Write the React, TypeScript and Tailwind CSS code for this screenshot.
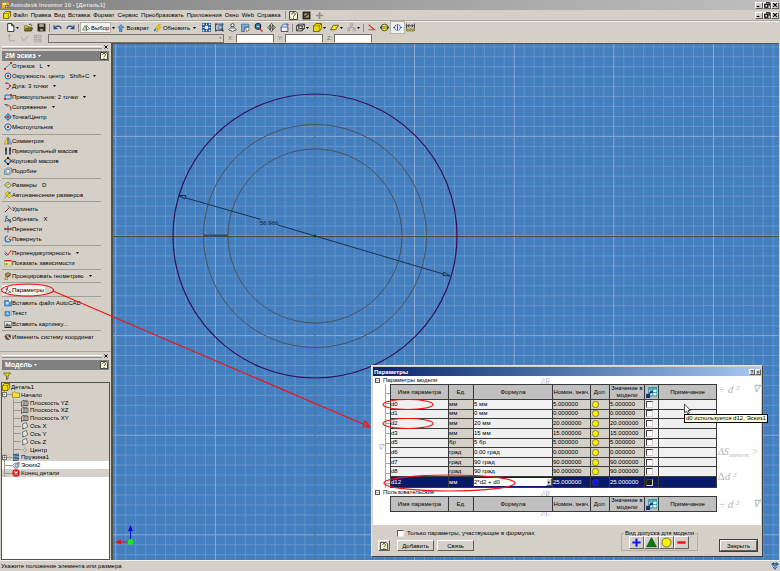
import { useState } from 'react';
import type { ReactNode } from 'react';

type Tool = { icon: string; label: string; hint?: string; menu?: boolean; active?: boolean };

const BLUE = '#1a6fc4';
const RED = '#d8271c';
const DARK = '#333333';

const icons: Record<string, ReactNode> = {
  line: <><path d="M2 13L13 3" stroke={BLUE} strokeWidth="1.6" /><path d="M0 12h4v4H0zM12 0h4v4h-4z" fill={RED} /></>,
  circle: <><circle cx="8" cy="8" r="6" stroke={BLUE} strokeWidth="2" /><path d="M6 6h4v4H6z" fill={RED} /></>,
  arc: <><path d="M5 2C13 3 15 10 8 13" stroke={BLUE} strokeWidth="2" /><path d="M3 1h4v3H3zM10 6h4v3h-4zM5 12h4v3H5z" fill={RED} /></>,
  rect: <><path d="M2 4h12v8H2z" stroke={BLUE} strokeWidth="2" /><path d="M0 10h4v4H0zM12 2h4v4h-4z" fill={RED} /></>,
  fillet: <><path d="M1 3h6M14 9v6" stroke={DARK} strokeWidth="1.4" /><path d="M6 4c5 0 7 3 7 7" stroke={RED} strokeWidth="2" /><path d="M2 2l5 6" stroke={BLUE} strokeWidth="1.4" /></>,
  point: <><circle cx="8" cy="8" r="5" stroke={BLUE} strokeWidth="2" /><path d="M8 0v16M0 8h16" stroke={BLUE} strokeWidth="1.6" /><path d="M6 6h4v4H6z" fill={RED} /></>,
  polygon: <><path d="M5 2h6l4 6-4 6H5L1 8z" stroke={BLUE} strokeWidth="2" /><path d="M6 6h4v4H6z" fill={RED} /></>,
  mirror: <><path d="M7 1v13H0z" fill="#f2dc20" stroke="#8a6d00" /><path d="M9 1v13h7z" fill="#7db9ee" stroke={BLUE} /><path d="M8 0v16" stroke={RED} /></>,
  pattern: <><path d="M2 1h4v14H2zM10 1h4v14h-4z" fill="#31435f" /><path d="M3 3h2v2H3zM11 3h2v2h-2z" fill={RED} /><path d="M3 9h2v2H3zM11 9h2v2h-2z" fill="#88b6e8" /></>,
  circular: <><circle cx="8" cy="8" r="5" stroke={DARK} strokeWidth="2" /><path d="M6 0h4v4H6zM6 12h4v4H6z" fill="#222" /><path d="M0 6h4v4H0zM12 6h4v4h-4z" fill={BLUE} /><path d="M3 2h3v3H3z" fill="#d9a514" /></>,
  offset: <><path d="M1 6l4-4h10v8l-3 5H1z" fill="#b4cfe6" stroke="#35536f" /><path d="M4 8l2-3h6v5l-2 2H4z" fill="#f1f1f1" stroke="#35536f" /></>,
  dimension: <><path d="M1 8l7-6 7 6-7 6z" fill="#f4e25a" stroke={BLUE} strokeWidth="1.5" /><path d="M5 9l5-3" stroke={DARK} /></>,
  autodim: <><path d="M2 6l5-5 8 8-5 5z" fill="#f2d81d" stroke="#8b7a12" /><path d="M1 14L13 2M9 2l4 3" stroke={BLUE} strokeWidth="1.4" /></>,
  extend: <><path d="M2 14l6-6" stroke={DARK} strokeWidth="2" /><path d="M8 8l3-3" stroke={RED} strokeWidth="2" /><path d="M8 1l7 8" stroke={BLUE} strokeWidth="2" /></>,
  trim: <><path d="M2 14L6 1M5 12L14 9" stroke={DARK} strokeWidth="1.6" /><path d="M3 3l11 11" stroke={BLUE} strokeWidth="2" /><circle cx="12" cy="13" r="2" stroke={DARK} /></>,
  move: <><path d="M8 1v14M1 8h14" stroke={BLUE} strokeWidth="2" /><path d="M5 6h6v4H5z" fill={RED} /><path d="M0 8l3-3v6zM16 8l-3-3v6z" fill={DARK} /></>,
  rotate: <><path d="M8 2a6 6 0 1 0 6 7" stroke={BLUE} strokeWidth="2.4" /><path d="M8 9l6-6M10 9h5" stroke={RED} strokeWidth="1.6" /></>,
  perp: <><path d="M2 5l6 7L15 2" stroke={RED} strokeWidth="2" /><path d="M1 8l5 6" stroke={BLUE} strokeWidth="2" /></>,
  constraints: <><path d="M1 3h14v11H1z" fill="#fff7cf" stroke="#8a8a4a" /><path d="M1 2h14v3H1z" fill={RED} /><path d="M3 8h4v4H3z" fill="#52a344" /><path d="M9 8h4v4H9z" fill="#e4cf2a" /></>,
  project: <><path d="M2 4l6-3 6 3-3 5H4z" fill="#a5915b" stroke="#423617" /><path d="M3 14l9-8" stroke={DARK} strokeWidth="1.6" /><path d="M2 10h5v5H2z" fill="#efdc3d" stroke="#6d5f10" /></>,
  fx: <><path d="M9 2C6 1 7 5 6 8s-1 6-4 5M3 6h5" stroke={DARK} strokeWidth="1.6" /><path d="M9 9l5 5M14 9l-5 5" stroke={DARK} strokeWidth="1.4" /></>,
  acad: <><path d="M1 3h14v11H1z" fill="#4a97db" stroke="#1e5d9b" /><path d="M4 6h5v5H4z" fill="#cfe6fb" /><path d="M10 1h4v4h-4z" fill="#f1f1f1" /></>,
  text: <><path d="M2 5h9v9H2z" fill="#4a97db" stroke="#1e5d9b" /><path d="M13 1v14M5 12l2-5 2 5" stroke="#dcecff" strokeWidth="1.4" /><path d="M14 2v12" stroke="#1e5d9b" /></>,
  image: <><path d="M1 3h14v10H1z" fill="#dfe9ee" stroke="#444" /><path d="M2 12l4-6 4 4 2-2 2 4z" fill="#496a58" /><path d="M1 15h14" stroke="#222" strokeWidth="2" /></>,
  ucs: <><circle cx="8" cy="8" r="6" fill="#524b45" /><path d="M3 3l10 10M8 2v8h6" stroke="#eee" strokeWidth="1.4" /><path d="M1 8l4-5" stroke={RED} strokeWidth="2" /></>,
  part: <><path d="M1 5l4-4h10v9l-4 5H1z" fill="#f5dc00" stroke="#5b5200" strokeWidth="1.5" /><path d="M1 5h10v10M11 5l4-4" stroke="#5b5200" /></>,
  app: <><path d="M0 1h16v14H0z" fill="#f0a818" /><path d="M2 3h7v5H2z" fill="#fff3c8" /><path d="M7 7h8v7H7z" fill="#2d6db8" /><path d="M9 9h3v3H9z" fill="#fff" /></>,
  new: <path d="M3 1h7l4 4v10H3zM10 1v4h4" fill="#fff" stroke="#222" strokeWidth="1.6" />,
  open: <><path d="M1 5h5l1 2h6v7H1z" fill="#e8c62a" stroke="#4d4210" /><path d="M4 9h12l-3 5H1z" fill="#7d7228" stroke="#2d270a" /><path d="M9 3c2-2 4-1 5 2" stroke="#222" strokeWidth="1.5" /></>,
  save: <><path d="M1 1h14v14H1z" fill="#26261f" /><path d="M4 2h8v5H4z" fill="#a9a69d" /><path d="M5 10h6v4H5z" fill="#8f8d80" /></>,
  undo: <path d="M2 4v6h6M3 9c3-5 11-5 11 1" stroke="#26449b" strokeWidth="2.2" />,
  redo: <path d="M14 4v6H8M13 9C10 4 2 4 2 10" stroke="#26449b" strokeWidth="2.2" />,
  select: <><path d="M1 12l5-9 4 9z" fill="#c8e8c9" stroke="#328b45" strokeWidth="1.5" /><path d="M9 3v10l3-3h4z" fill="#fff" stroke="#222" /></>,
  back: <path d="M8 1l6 6h-4v8H5V7H2z" fill="#4ba0e4" stroke="#17558f" />,
  update: <><path d="M10 0L3 9h5l-3 7 9-10H9l4-6z" fill="#ffd800" stroke="#b48800" /><path d="M0 14l4-4" stroke={BLUE} strokeWidth="3" /></>,
  zoomAll: <><path d="M0 0h16v16H0z" fill="#1c4f86" /><path d="M5 5h6v6H5z" fill="#e6eef7" /><path d="M7 1h2v3H7zM7 12h2v3H7zM1 7h3v2H1zM12 7h3v2h-3zM1 1h3v3H1zM12 1h3v3h-3zM1 12h3v3H1zM12 12h3v3h-3z" fill="#dcebfa" /></>,
  zoomWin: <><path d="M1 2h12v11H1z" stroke="#1c3f6a" strokeWidth="1.6" /><circle cx="9" cy="8" r="4" fill="#8fc0ec" stroke="#333" /><path d="M0 1h3v3H0zM12 1h3v3h-3zM0 12h3v3H0z" fill="#1c4f86" /><path d="M12 11l3 4" stroke="#222" strokeWidth="2" /></>,
  zoom: <><circle cx="8" cy="4" r="3" fill="#e6eef7" stroke="#333" strokeWidth="1.5" /><path d="M6 7l-5 5 7 3 7-3-5-5z" fill="#eee" stroke="#333" strokeWidth="1.3" /><path d="M5 11l3-2 3 2" stroke="#333" /></>,
  pan: <><path d="M1 2h13v5H6v8H1z" fill="#70aee4" stroke="#1c3f6a" /><path d="M8 8h6v5l-4 2z" fill="#fff" stroke="#333" /></>,
  lens: <><circle cx="7" cy="6" r="5" fill="#2f7fcb" stroke="#222" strokeWidth="1.8" /><path d="M5 6h4" stroke="#fff" strokeWidth="1.5" /><path d="M10 10l5 5" stroke={RED} strokeWidth="2.4" /></>,
  orbit: <><path d="M1 8l5-4v3h4V4l5 4-5 4V9H6v3z" fill="#ddd" stroke="#333" strokeWidth="1.2" /><ellipse cx="8" cy="8" rx="3" ry="7" stroke="#333" strokeWidth="1.4" /></>,
  look: <><path d="M2 7h12v8H2z" fill="#f4f4f4" stroke="#1c3f6a" strokeWidth="1.5" /><path d="M3 6l3-4h8l-2 4" fill="#cfe6fb" stroke={BLUE} strokeWidth="1.6" /><path d="M12 1l3 3" stroke={RED} strokeWidth="2" /></>,
  cube: <path d="M1 5l4-3h10v8l-4 4H1zM1 5h10v9M11 5l4-3M5 2v8h10M5 10l-4 4" stroke="#222" strokeWidth="1.4" />,
  plane: <path d="M1 12L6 4h9l-5 8z" fill="#f4e41c" stroke="#4d4210" strokeWidth="1.4" />,
  nodes: <path d="M6 1h4v4H6zM1 10h4v4H1zM11 10h4v4h-4zM8 5v3M3 10V8h10v2" stroke="#a3a099" strokeWidth="1.5" />,
  angle: <><path d="M3 3l10 9" stroke={RED} strokeWidth="2" /><path d="M2 12h13" stroke="#a8583c" strokeWidth="1.6" /></>,
  section: <><circle cx="8" cy="8" r="6" fill="#f4e41c" stroke="#333" strokeWidth="1.4" /><path d="M0 8h16" stroke="#333" strokeWidth="3" /><path d="M3 8h10" stroke="#7db9ee" strokeWidth="2" /></>,
  center: <><path d="M6 3a5.500 5.500 0 0 0 0 10M10 3a5.500 5.500 0 0 1 0 10" stroke={BLUE} strokeWidth="1.6" /><path d="M8 2v12" stroke={RED} strokeWidth="1.8" /><path d="M0 8h3M13 8h3" stroke={BLUE} strokeWidth="1.6" /></>,
  measure: <><path d="M1 1v9M15 1v9M3 5h10M6 2L3 5l3 3M10 2l3 3-3 3" stroke="#222" strokeWidth="1.4" /><path d="M1 11h14v3H1z" fill="#e8d410" stroke="#333" /></>,
  help: <><path d="M1 1h11l3 3v11H1z" fill="#fffbd2" stroke="#222" strokeWidth="1.5" /><path d="M5 6c0-4 6-4 6 0 0 2-3 2-3 4M8 12v2" stroke="#222" strokeWidth="1.7" /></>,
  film: <><path d="M1 1h14v14H1z" fill="#252525" /><path d="M4 4h8v8H4z" fill="#a09559" /><path d="M4 11l7-6" stroke="#222" strokeWidth="2" /></>,
  plus: <path d="M8 2v12M2 8h12" stroke="#8b8b86" strokeWidth="3" />,
  axes: <path d="M4 2v10h10M2 4l2-3 2 3" stroke="#a3a099" strokeWidth="1.5" />,
  bend: <path d="M2 5l5 7 7-8" stroke="#a3a099" strokeWidth="1.5" />,
  blocks: <path d="M2 2h4v4H2zM9 2h5v5H9zM2 9h5v5H2zM10 10h4v4h-4z" stroke="#a3a099" strokeWidth="1.5" />,
  folder: <path d="M1 4l2-2h4l2 2h6v9H1z" fill="#f4e13a" stroke="#7c6f16" strokeWidth="1.3" />,
  workplane: <><path d="M1 5l5-3v10l-5 3zM6 4h8v9H5" fill="#cbc8bf" stroke="#333" strokeWidth="1.3" /><path d="M10 1v13" stroke="#333" /></>,
  axis: <><path d="M3 4l8-3 2 9-9 4z" fill="#eceae5" stroke="#333" strokeWidth="1.2" /><path d="M2 15l3-3" stroke="#333" /></>,
  dot: <><path d="M8 1v14M1 8h14" stroke="#aaa79f" strokeWidth="1.3" /><path d="M8 4l4 4-4 4-4-4z" fill="#d4d0c8" stroke="#888" /></>,
  coil: <path d="M2 3l12-1M2 6l12-1M2 9l12-1M2 12l12-1M2 15l12-1" stroke="#1f4e86" strokeWidth="2" />,
  sketch: <><path d="M1 9l5-5h8v6l-4 4H5z" fill="#f3f3f3" stroke="#444" strokeWidth="1.3" /><circle cx="9" cy="9" r="3" stroke={BLUE} strokeWidth="1.6" /><path d="M10 7l5-5" stroke={RED} strokeWidth="2" /></>,
  end: <><circle cx="8" cy="8" r="7.5" fill="#e01b1b" /><path d="M5 5l6 6M11 5l-6 6" stroke="#fff" strokeWidth="2.2" /></>,
  filter: <path d="M1 2h14L10 8v6l-3 1V8z" fill="#f4dc00" stroke="#4d4210" strokeWidth="1.4" />,
  export: <><path d="M4 1h12v12H4z" fill="#eef9fb" stroke="#1c7f96" strokeWidth="1.4" /><path d="M4 2h12v2H4z" fill="#1c9bb0" /><path d="M4 8h12M10 1v12" stroke="#1c9bb0" strokeWidth="1.2" /><path d="M0 10h6v6H0z" fill="#16366f" /><path d="M5 10l4-4M6 6h3v3" stroke="#16366f" strokeWidth="2" /></>,
  spark: <path d="M2 3h12v3H2zM8 6v9M3 9l5 5 5-5M5 1v6M11 1v6" stroke="#1e5d9b" strokeWidth="2" />,
};

const Icon = ({ name, className = 'size-2' }: { name: string; className?: string }) => (
  <svg viewBox="0 0 16 16" fill="none" className={`${className} shrink-0`} aria-hidden="true">
    {icons[name]}
  </svg>
);

const Caret = ({ className = 'text-black' }: { className?: string }) => (
  <svg viewBox="0 0 3 2" className={`w-[3px] h-[2px] shrink-0 ${className}`} aria-hidden="true">
    <path d="M0 0h3L1.500 2z" fill="currentColor" />
  </svg>
);

const menuItems = ['Файл', 'Правка', 'Вид', 'Вставка', 'Формат', 'Сервис', 'Преобразовать', 'Приложения', 'Окно', 'Web', 'Справка'];

const toolGroups: Tool[][] = [
  [
    { icon: 'line', label: 'Отрезок', hint: 'L', menu: true },
    { icon: 'circle', label: 'Окружность: центр', hint: 'Shift+C', menu: true },
    { icon: 'arc', label: 'Дуга: 3 точки', menu: true },
    { icon: 'rect', label: 'Прямоугольник: 2 точки', menu: true },
    { icon: 'fillet', label: 'Сопряжение', menu: true },
    { icon: 'point', label: 'Точка/Центр' },
    { icon: 'polygon', label: 'Многоугольник' },
  ],
  [
    { icon: 'mirror', label: 'Симметрия' },
    { icon: 'pattern', label: 'Прямоугольный массив' },
    { icon: 'circular', label: 'Круговой массив' },
    { icon: 'offset', label: 'Подобие' },
  ],
  [
    { icon: 'dimension', label: 'Размеры', hint: 'D' },
    { icon: 'autodim', label: 'Автонанесение размеров' },
  ],
  [
    { icon: 'extend', label: 'Удлинить' },
    { icon: 'trim', label: 'Обрезать', hint: 'X' },
    { icon: 'move', label: 'Перенести' },
    { icon: 'rotate', label: 'Повернуть' },
  ],
  [
    { icon: 'perp', label: 'Перпендикулярность', menu: true },
    { icon: 'constraints', label: 'Показать зависимости' },
  ],
  [{ icon: 'project', label: 'Проецировать геометрию', menu: true }],
  [{ icon: 'fx', label: 'Параметры', active: true }],
  [
    { icon: 'acad', label: 'Вставить файл AutoCAD' },
    { icon: 'text', label: 'Текст' },
    { icon: 'image', label: 'Вставить картинку...' },
  ],
  [{ icon: 'ucs', label: 'Изменить систему координат' }],
];

const tree = [
  { icon: 'part', label: 'Деталь1', depth: 0 },
  { icon: 'folder', label: 'Начало', depth: 1, box: '−' },
  { icon: 'workplane', label: 'Плоскость YZ', depth: 2 },
  { icon: 'workplane', label: 'Плоскость XZ', depth: 2 },
  { icon: 'workplane', label: 'Плоскость XY', depth: 2 },
  { icon: 'axis', label: 'Ось X', depth: 2 },
  { icon: 'axis', label: 'Ось Y', depth: 2 },
  { icon: 'axis', label: 'Ось Z', depth: 2 },
  { icon: 'dot', label: 'Центр', depth: 2 },
  { icon: 'coil', label: 'Пружина1', depth: 1, box: '+' },
  { icon: 'sketch', label: 'Эскиз2', depth: 1, current: true },
  { icon: 'end', label: 'Конец детали', depth: 1 },
];

const params = [
  { name: 'd0', unit: 'мм', formula: '5 мм', value: '5.000000' },
  { name: 'd1', unit: 'мм', formula: '0 мм', value: '0.000000' },
  { name: 'd2', unit: 'мм', formula: '20 мм', value: '20.000000' },
  { name: 'd3', unit: 'мм', formula: '15 мм', value: '15.000000' },
  { name: 'd5', unit: 'бр', formula: '5 бр', value: '5.000000' },
  { name: 'd6', unit: 'град', formula: '0.00 град', value: '0.000000' },
  { name: 'd7', unit: 'град', formula: '90 град', value: '90.000000' },
  { name: 'd8', unit: 'град', formula: '90 град', value: '90.000000' },
  { name: 'd12', unit: 'мм', formula: '2*d2 + d0', value: '25.000000' },
];

const raised = 'border border-t-white border-l-white border-r-[#606060] border-b-[#606060] bg-[#d4d0c8]';

const WindowButtons = () => (
  <div className="flex">
    {['M2 12h7', 'M5 2h9v8M2 6h8v8H2z', 'M3 3l10 10M13 3L3 13'].map((d) => (
      <button key={d} aria-label="window" className={`${raised} w-2 h-[7px] flex items-center justify-center`}>
        <svg viewBox="0 0 16 16" className="size-[6px]" fill="none">
          <path d={d} stroke="#000" strokeWidth="3" />
        </svg>
      </button>
    ))}
  </div>
);

const Separator = () => <span className="w-px h-2 bg-[#8f8c85] mx-px" />;

const IconButton = ({ name, menu, on }: { name: string; menu?: boolean; on?: boolean }) => (
  <button aria-label={name} className={`flex items-center gap-px px-[2px] h-[11px] ${on ? 'bg-[#f1efeb] outline outline-[#b5b2aa]' : ''}`}>
    <Icon name={name} className="size-[9px]" />
    {menu && <Caret />}
  </button>
);

const Toolbars = () => (
  <>
    <div className="h-[11px] flex items-center justify-between pl-[3px] pr-px border-b border-[#a8a59d]">
      <nav className="flex items-center">
        <Icon name="part" />
        <div className="flex items-center gap-[3px] pl-[2px] pr-[3px]">
          {menuItems.map((item) => (
            <button key={item}>{item}</button>
          ))}
        </div>
        <Separator />
        <IconButton name="help" />
        <IconButton name="film" />
        <IconButton name="plus" />
      </nav>
      <WindowButtons />
    </div>
    <div className="h-3 flex items-center pl-1 border-t border-[#f1efeb]">
      <IconButton name="new" menu />
      <div className="w-px" />
      <IconButton name="open" />
      <IconButton name="save" />
      <Separator />
      <IconButton name="undo" />
      <IconButton name="redo" />
      <Separator />
      <button className="flex items-center gap-px h-[11px] px-px bg-[#f4f3f0] border border-[#b5b2aa]">
        <Icon name="select" />
        Выбор
      </button>
      <button aria-label="more" className="px-px"><Caret /></button>
      <button className="flex items-center gap-px px-px">
        <Icon name="back" />
        Возврат
      </button>
      <button className="flex items-center gap-px pl-1 pr-[3px]">
        <Icon name="update" />
        Обновить
      </button>
      <button aria-label="more" className="pr-1"><Caret /></button>
      {['zoomAll', 'zoomWin', 'zoom', 'pan', 'lens', 'orbit', 'look'].map((name) => (
        <IconButton key={name} name={name} />
      ))}
      <Separator />
      <IconButton name="cube" menu />
      <IconButton name="part" menu />
      <IconButton name="plane" menu />
      <IconButton name="nodes" menu />
      <Separator />
      <IconButton name="angle" />
      <IconButton name="section" />
      <IconButton name="center" on />
      <IconButton name="measure" />
    </div>
    <div className="h-[10px] flex items-center pl-[5px]">
      <IconButton name="axes" />
      <IconButton name="bend" />
      <IconButton name="blocks" />
      <div className="relative ml-1 w-[176px]">
        <select aria-label="Стиль" disabled className="appearance-none block w-full h-[9px] bg-[#d4d0c8] border border-[#76736c]" />
        <span className="absolute right-[2px] top-[3px]"><Caret className="text-[#8f8c85]" /></span>
      </div>
      {['X', 'Y', 'Z'].map((axis) => (
        <label key={axis} className="flex items-center gap-[2px] ml-[4px] text-[#76736c]">
          {axis}:
          <input className="w-[38px] h-[9px] bg-white border border-[#76736c] border-b-[#e8e6e1]" />
        </label>
      ))}
    </div>
  </>
);

const PanelHeader = ({ title }: { title: string }) => (
  <>
    <div className="flex items-center gap-[2px] h-2 px-[2px]">
      <div className="flex-1 h-[3px] border-y border-t-white border-b-[#8f8c85]" />
      <button aria-label="Закрыть панель" className="w-[5px]">
        <svg viewBox="0 0 16 16" className="size-1" fill="none">
          <path d="M2 2l12 12M14 2L2 14" stroke="#000" strokeWidth="4" />
        </svg>
      </button>
    </div>
    <div className="h-[10px] mx-[2px] pl-[3px] pr-px flex items-center justify-between bg-[#808080] text-white">
      <button className="flex items-center gap-[2px] font-bold text-[7px]">
        {title}
        <Caret className="text-white" />
      </button>
      <button aria-label="Справка"><Icon name="help" /></button>
    </div>
  </>
);

const SketchPanel = () => (
  <section className="flex-1 flex flex-col border-b border-[#a8a59d]">
    <PanelHeader title="2М эскиз" />
    <div className="flex-1 flex flex-col justify-between pl-[2px] pr-[10px] pb-[9px]">
      {toolGroups.flatMap((group, g) => [
        ...(g > 0 ? [<hr key={`sep${g}`} className="border-0 border-t border-t-[#a19e96] my-px" />] : []),
        ...group.map((tool) => (
          <button key={tool.label} className="flex items-center h-[10px] self-start">
            <span className={`flex items-center pl-[2px] pr-px h-[10px] ${tool.active ? 'bg-[#f4f3f0]' : ''}`}>
              <Icon name={tool.icon} />
              <span>{tool.label}</span>
            </span>
            {tool.hint && <span className="pl-1">{tool.hint}</span>}
            {tool.menu && <span className="pl-1"><Caret /></span>}
          </button>
        )),
      ])}
    </div>
  </section>
);

const ModelPanel = () => (
  <section className="h-[208px] flex flex-col">
    <PanelHeader title="Модель" />
    <div className="h-3 flex items-center pl-[3px]">
      <button aria-label="Фильтр"><Icon name="filter" /></button>
    </div>
    <div className="flex-1 mx-px border border-[#55524c] bg-white">
      <ul className="grid grid-rows-12 h-[94px]">
        {tree.map((node) => (
          <li
            key={node.label}
            className={`flex items-center ${node.current ? 'bg-white' : 'bg-[#d4d0c8]'} ${node.depth === 2 ? 'pl-[10px]' : node.depth === 1 ? 'pl-px' : ''}`}
          >
            {node.depth > 0 && (
              <span className="relative flex items-center w-2 h-full border-l border-[#9b9890] ml-px">
                <span className="w-full h-px bg-[#9b9890]" />
                {node.box && (
                  <span className="absolute -left-[3px] size-[5px] border border-[#76736c] bg-white text-[5px] leading-[3px] text-center">{node.box}</span>
                )}
              </span>
            )}
            <Icon name={node.icon} />
            <span className="pl-px">{node.label}</span>
          </li>
        ))}
      </ul>
    </div>
  </section>
);

// sketch origin and the spacing of the grid around it
const CX = 202;
const CY = 192;
const STEP = 9.96;

const gridPath = (major: boolean) => {
  const parts: string[] = [];
  for (let k = -40; k <= 80; k++) {
    if ((k % 10 === 0) !== major) continue;
    parts.push(`M${CX + k * STEP} 0v2000M0 ${CY + k * STEP}h3000`);
  }
  return parts.join('');
};

const Canvas = () => (
  <main className="flex-1 border-l-2 border-t border-[#55524c] bg-[#447fc0] overflow-hidden">
    <svg className="w-full h-full" fill="none">
      <path d={gridPath(false)} stroke="#6494ca" />
      <path d={gridPath(true)} stroke="#8fa9cf" />
      <path d="M202 0v2000" stroke="#315f8f" />
      <path d="M0 192.500h3000" stroke="#4b4a40" />
      <circle cx="202" cy="192" r="142" stroke="#350e58" strokeWidth="1.2" />
      <circle cx="202" cy="192" r="111.500" stroke="#4c5358" />
      <circle cx="202" cy="192" r="87" stroke="#4c5358" />
      <path d="M91 191.500h24" stroke="#3a4a5a" strokeWidth="2" />
      <path d="M66 152l82 23.500M165 181l172 51" stroke="#17304f" />
      <path d="M66 151.500l7 0-1 3.500zM337 232l-7-.5 1-3.500z" fill="#447fc0" stroke="#17304f" />
      <circle cx="202" cy="192" r="1.500" fill="#17304f" />
      <text x="147" y="181" fill="#10223a">56.966</text>
      <path d="M17.500 498v-14" stroke="#1414e0" />
      <path d="M17.500 498H6" stroke="#c01c3c" />
      <path d="M15 487l2.500-6 2.500 6z" fill="#0a0ae0" />
      <path d="M8 495.500l-6 2.500 6 2.500z" fill="#f01010" />
      <circle cx="17.500" cy="498" r="3" fill="#12e81c" />
    </svg>
  </main>
);

const ParamTable = ({ rows }: { rows: typeof params }) => {
  const cell = 'border border-[#3a3a3a] p-0 overflow-hidden whitespace-nowrap';
  return (
    <table className={`table-fixed w-[327px] border-collapse bg-[#f0f0f0] ${rows.length ? 'h-[104px]' : ''}`}>
      <thead>
        <tr className="h-[15px] bg-[#c0c0c0] leading-[7px]">
          <th className={`${cell} w-[58px] font-normal`}>Имя параметра</th>
          <th className={`${cell} w-[25px] font-normal`}>Ед.</th>
          <th className={`${cell} w-[79px] font-normal`}>Формула</th>
          <th className={`${cell} w-[38px] font-normal`}>Номин. знач.</th>
          <th className={`${cell} w-[19px] font-normal`}>Доп.</th>
          <th className={`${cell} w-[35px] font-normal`}>Значение в<br />модели</th>
          <th className={`${cell} w-[14px]`}><Icon name="export" className="size-[11px] mx-auto" /></th>
          <th className={`${cell} font-normal`}>Примечание</th>
        </tr>
      </thead>
      <tbody>
        {rows.map((row) => {
          const selected = row.name === 'd12';
          const shade = selected ? '' : 'bg-[#d4d0c8]';
          return (
            <tr key={row.name} className={`leading-[7px] ${selected ? 'bg-[#0a1a6a] text-white' : ''}`}>
              <td className={cell}>{row.name}</td>
              <td className={`${cell} ${shade}`}>{row.unit}</td>
              <td className={cell}>
                {selected ? (
                  <span className="flex bg-white text-black">
                    <input aria-label="Формула" defaultValue={row.formula} className="flex-1 min-w-0 h-2" />
                    <button aria-label="Список" className={`${raised} w-[6px] h-2 flex items-center justify-center`}>
                      <svg viewBox="0 0 3 4" className="w-[2px] h-[3px]"><path d="M0 0v4l3-2z" /></svg>
                    </button>
                  </span>
                ) : row.formula}
              </td>
              <td className={`${cell} ${shade}`}>{row.value}</td>
              <td className={`${cell} ${shade}`}>
                <svg viewBox="0 0 8 8" className="size-[7px] ml-px">
                  <circle cx="4" cy="4" r="3.600" fill={selected ? '#1010f0' : '#fbf000'} stroke="#4a4a20" strokeWidth=".7" />
                </svg>
              </td>
              <td className={`${cell} ${shade}`}>{row.value}</td>
              <td className={cell}>
                <input
                  type="checkbox"
                  aria-label={row.name}
                  className={`appearance-none block size-[7px] ml-px border border-t-[#404040] border-l-[#404040] border-r-[#d4d0c8] border-b-[#d4d0c8] ${selected ? 'bg-[#1b1b1b]' : 'bg-white'}`}
                />
              </td>
              <td className={cell} />
            </tr>
          );
        })}
      </tbody>
    </table>
  );
};

const GroupTitle = ({ children }: { children: ReactNode }) => (
  <div className="flex items-center gap-[3px] h-2 pl-[2px]">
    <span className="size-[5px] border border-[#55524c] text-[5px] leading-[3px] text-center">−</span>
    {children}
  </div>
);

const Formula = ({ className, children }: { className: string; children: ReactNode }) => (
  <span className={`absolute whitespace-nowrap italic text-[#b4b4b8] leading-3 font-['Liberation_Serif',serif] ${className}`}>{children}</span>
);

const ParametersDialog = () => {
  const [onlyUsed, setOnlyUsed] = useState(false);
  return (
    <div role="dialog" aria-label="Параметры" className="absolute left-[371px] top-[365px] w-[392px] border border-t-[#e8e6e1] border-l-[#e8e6e1] border-r-[#404040] border-b-[#404040] bg-[#d4d0c8] p-px">
      <div className="h-[9px] flex items-center justify-between pl-px bg-linear-to-r from-[#0a246a] to-[#a6caf0] text-white">
        <h2 className="font-bold text-[6px]">Параметры</h2>
        <div className="flex">
          <button aria-label="Справка" className={`${raised} size-[6px] text-[5px] leading-[4px] text-black`}>?</button>
          <button aria-label="Закрыть окно" className={`${raised} size-[6px] text-[5px] leading-[4px] text-black`}>×</button>
        </div>
      </div>
      <div className="relative h-[149px] bg-white overflow-hidden">
        <Formula className="left-[168px] top-0 text-[8px]">∂R</Formula>
        <Formula className="left-[5px] top-[66px] text-[8px]">∇</Formula>
        <Formula className="left-[168px] top-[113px] text-[8px]">∂R</Formula>
        <Formula className="left-[168px] top-[132px] text-[8px]">∂L</Formula>
        <Formula className="left-[346px] top-[7px] text-[11px]">÷ d ²</Formula>
        <Formula className="left-[380px] top-[7px] text-[10px]">∇</Formula>
        <Formula className="left-[345px] top-[70px] text-[10px]">ΔS<sub className="text-[6px]">universe</sub> &gt;</Formula>
        <Formula className="left-[345px] top-[94px] text-[11px]">∆d ²</Formula>
        <Formula className="left-[346px] top-[122px] text-[11px]">÷ d ²</Formula>
        <Formula className="left-[380px] top-[122px] text-[10px]">∇</Formula>
        <div className="relative">
          <GroupTitle>Параметры модели</GroupTitle>
          <div className="flex pl-[12px]">
            <div className="w-[5px] border-l border-[#a8a59d] bg-[repeating-linear-gradient(to_bottom,transparent_0_9px,#a8a59d_9px_10px)]" />
            <ParamTable rows={params} />
          </div>
          <GroupTitle>Пользовательские</GroupTitle>
          <div className="pl-[17px]">
            <ParamTable rows={[]} />
          </div>
        </div>
      </div>
      <div className="h-[30px] flex items-end justify-between pl-[5px] pr-1 pb-1">
        <div className="flex flex-col gap-[3px]">
          <label className="flex items-center gap-[3px] pl-[19px] h-2">
            <input
              type="checkbox"
              checked={onlyUsed}
              onChange={() => setOnlyUsed(!onlyUsed)}
              className="appearance-none size-[7px] bg-white border border-t-[#606060] border-l-[#606060] border-r-[#e8e6e1] border-b-[#e8e6e1] checked:bg-[#404040]"
            />
            Только параметры, участвующие в формулах
          </label>
          <div className="flex items-center">
            <button aria-label="Справка" className={`${raised} w-3 h-[11px] flex items-center justify-center`}><Icon name="help" /></button>
            <button className={`${raised} ml-[7px] w-[37px] h-[11px]`}>Добавить</button>
            <button className={`${raised} ml-[3px] w-[37px] h-[11px]`}>Связь</button>
          </div>
        </div>
        <div className="flex items-end gap-[22px]">
          <fieldset className="border border-[#b0ada5] px-[2px] pb-px">
            <legend className="px-px leading-[6px]">Вид допуска для модели</legend>
            <div className="flex justify-center">
              {[
                <path key="p" d="M8 2v12M2 8h12" stroke="#1414f0" strokeWidth="3" />,
                <path key="t" d="M8 1l7 13H1z" fill="#0c7a14" stroke="#083f0b" />,
                <circle key="c" cx="8" cy="8" r="6.500" fill="#fbf000" stroke="#4a4a20" />,
                <path key="m" d="M2 8h12" stroke="#f01010" strokeWidth="3.500" />,
              ].map((shape, i) => (
                <button key={i} aria-label={`Допуск ${i + 1}`} className={`${raised} w-[15px] h-[13px] flex items-center justify-center`}>
                  <svg viewBox="0 0 16 16" className="size-[11px]" fill="none">{shape}</svg>
                </button>
              ))}
            </div>
          </fieldset>
          <button className={`${raised} w-[37px] h-[11px] outline outline-[#404040]`}>Закрыть</button>
        </div>
      </div>
    </div>
  );
};

const Annotations = () => (
  <svg className="absolute inset-0 w-full h-full pointer-events-none" fill="none" stroke="#f01414" strokeWidth="1.200">
    <ellipse cx="27.500" cy="290" rx="26" ry="6" />
    <path d="M53 291L370 427M365 421l5 6-7 0z" />
    <ellipse cx="408" cy="404.500" rx="25" ry="5" />
    <ellipse cx="408" cy="423.500" rx="25" ry="5" />
    <ellipse cx="449.500" cy="483" rx="65.500" ry="8" />
    <path d="M684.500 404v9l2-2 1.500 3 1.500-1-1.500-2.500h2.500z" fill="#fff" stroke="#222" strokeWidth=".8" />
  </svg>
);

export default function App() {
  return (
    <div className="relative h-screen flex flex-col overflow-hidden bg-[#d4d0c8] text-black text-[6px] leading-[8px] whitespace-nowrap font-['Liberation_Sans',sans-serif]">
      <header className="h-[10px] flex items-center justify-between pl-[2px] pr-px bg-linear-to-r from-[#828282] to-[#bfbfbf]">
        <h1 className="flex items-center gap-px font-bold text-[6px] text-[#e0ddd6]">
          <Icon name="app" className="size-[7px]" />
          Autodesk Inventor 10 - [Деталь1]
        </h1>
        <WindowButtons />
      </header>
      <Toolbars />
      <div className="flex-1 min-h-0 flex pr-px">
        <aside className="w-[111px] flex flex-col">
          <SketchPanel />
          <ModelPanel />
        </aside>
        <Canvas />
      </div>
      <footer className="h-[11px] flex items-center justify-between px-px border-t border-[#f1efeb]">
        Укажите положение элемента или размера
        <Icon name="spark" />
      </footer>
      <ParametersDialog />
      <Annotations />
      <div role="tooltip" className="absolute left-[684px] top-[414px] px-px border border-black bg-[#ffffe1] leading-[7px]">
        d0 используется d12, Эскиз1
      </div>
    </div>
  );
}
